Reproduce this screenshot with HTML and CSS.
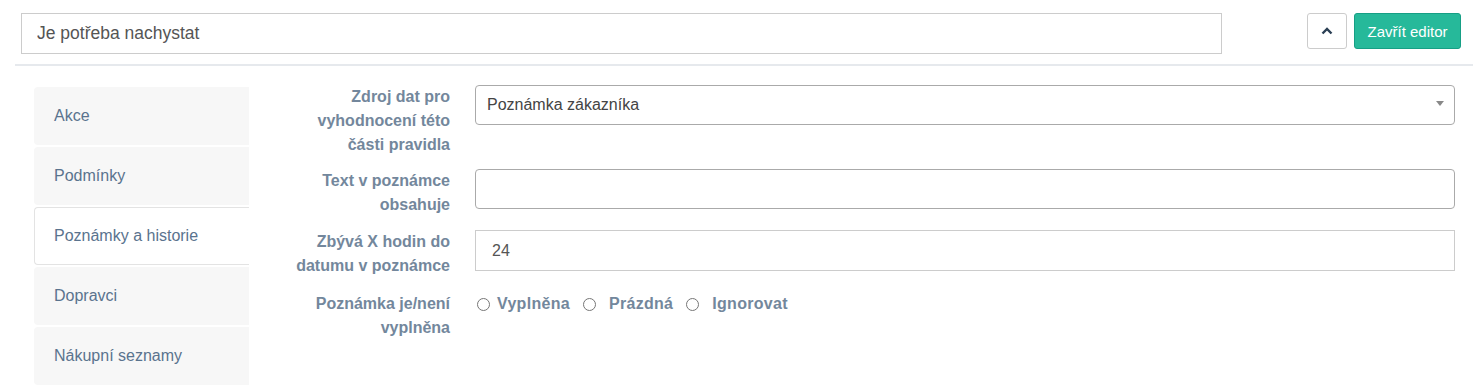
FILE: index.html
```html
<!DOCTYPE html>
<html lang="cs">
<head>
  <meta charset="UTF-8">
  <title>Editor pravidla</title>
  <link rel="stylesheet" href="styles.css">
</head>
<body>
  <div class="editor">
    <div class="editor-head">
      <input class="title-input" type="text" value="Je potřeba nachystat">
      <div class="head-buttons">
        <button class="btn btn-default" title="Sbalit">
          <svg width="12" height="8" viewBox="0 0 12 8"><path d="M1.5 6.5 L6 2 L10.5 6.5" fill="none" stroke="#2a3f54" stroke-width="2.4"/></svg>
        </button>
        <button class="btn btn-success">Zavřít editor</button>
      </div>
    </div>

    <div class="editor-body">
      <ul class="tabs">
        <li class="tab">Akce</li>
        <li class="tab">Podmínky</li>
        <li class="tab active">Poznámky a historie</li>
        <li class="tab">Dopravci</li>
        <li class="tab">Nákupní seznamy</li>
      </ul>

      <div class="form">
        <div class="row">
          <label class="label">Zdroj dat pro vyhodnocení této části pravidla</label>
          <div class="field">
            <div class="select">
              <span>Poznámka zákazníka</span>
              <b class="arrow"></b>
            </div>
          </div>
        </div>
        <div class="row">
          <label class="label">Text v poznámce obsahuje</label>
          <div class="field">
            <input class="input rounded" type="text">
          </div>
        </div>
        <div class="row">
          <label class="label">Zbývá X hodin do datumu v poznámce</label>
          <div class="field">
            <input class="input" type="text" value="24">
          </div>
        </div>
        <div class="row">
          <label class="label">Poznámka je/není vyplněna</label>
          <div class="field radios">
            <label class="radio"><input type="radio" name="filled"> Vyplněna</label>
            <label class="radio"><input type="radio" name="filled"> Prázdná</label>
            <label class="radio"><input type="radio" name="filled"> Ignorovat</label>
          </div>
        </div>
      </div>
    </div>
  </div>
</body>
</html>
```

FILE: styles.css
```css
body {
  margin: 0;
  font-family: "Liberation Sans", Arial, sans-serif;
  font-size: 16px;
  color: #73879c;
  background: #fff;
}
.editor {
  margin-left: 15px;
  width: 1458px;
}
.editor-head {
  display: flex;
  align-items: flex-start;
  padding: 13px 12px 10px 6px;
  border-bottom: 2px solid #e6e9ed;
}
.title-input {
  width: 1201px;
  height: 41px;
  box-sizing: border-box;
  border: 1px solid #ccc;
  padding: 0 15px;
  font-family: inherit;
  font-size: 17.5px;
  color: #555;
  outline: none;
}
.head-buttons {
  margin-left: auto;
  display: flex;
  gap: 7px;
}
.btn {
  height: 36px;
  box-sizing: border-box;
  border-radius: 3px;
  font-family: inherit;
  font-size: 15px;
  cursor: pointer;
}
.btn-default {
  width: 40px;
  background: #fff;
  border: 1px solid #ccc;
  display: flex;
  align-items: center;
  justify-content: center;
  padding: 0;
}
.btn-success {
  width: 107px;
  background: #26b99a;
  border: 1px solid #169f85;
  color: #fff;
  padding: 0;
}
.editor-body {
  display: flex;
  align-items: flex-start;
  padding: 19px 18px 0 19px;
}
.tabs {
  list-style: none;
  margin: 2px 0 0;
  padding: 0;
  width: 215px;
  display: flex;
  flex-direction: column;
  gap: 2px;
}
.tab {
  height: 58px;
  box-sizing: border-box;
  display: flex;
  align-items: center;
  padding-left: 20px;
  background: #f7f7f7;
  border-radius: 4px 0 0 4px;
  color: #5a738e;
}
.tab.active {
  background: #fff;
  border: 1px solid #e3e3e3;
  border-right: none;
  padding-left: 19px;
}
.form {
  flex: 1;
  display: flex;
  flex-direction: column;
  gap: 12px;
}
.row {
  display: flex;
  align-items: flex-start;
}
.row:nth-child(3) {
  margin-top: 1px;
}
.row:nth-child(4) {
  margin-top: 2px;
}
.label {
  width: 165px;
  margin-left: 36px;
  text-align: right;
  font-weight: bold;
  line-height: 24px;
}
.field {
  flex: 1;
  margin-left: 25px;
}
.select {
  position: relative;
  height: 40px;
  box-sizing: border-box;
  border: 1px solid #aaa;
  border-radius: 4px;
  display: flex;
  align-items: center;
  padding-left: 11px;
  color: #444;
}
.arrow {
  position: absolute;
  right: 10px;
  top: 15px;
  border-style: solid;
  border-width: 5px 4px 0 4px;
  border-color: #888 transparent transparent transparent;
}
.input {
  width: 100%;
  height: 41px;
  box-sizing: border-box;
  border: 1px solid #ccc;
  padding: 0 16px;
  font-family: inherit;
  font-size: 16px;
  color: #555;
  outline: none;
}
.input.rounded {
  height: 40px;
  border-color: #aaa;
  border-radius: 4px;
}
.radios {
  display: flex;
  line-height: 24px;
}
.radio {
  font-weight: bold;
  letter-spacing: 0.3px;
  margin-right: 11px;
  display: flex;
  align-items: center;
}
.radio input {
  margin: 0 7px 0 2px;
  width: 13px;
  height: 13px;
}
.radio + .radio input {
  margin-right: 13px;
}
```
